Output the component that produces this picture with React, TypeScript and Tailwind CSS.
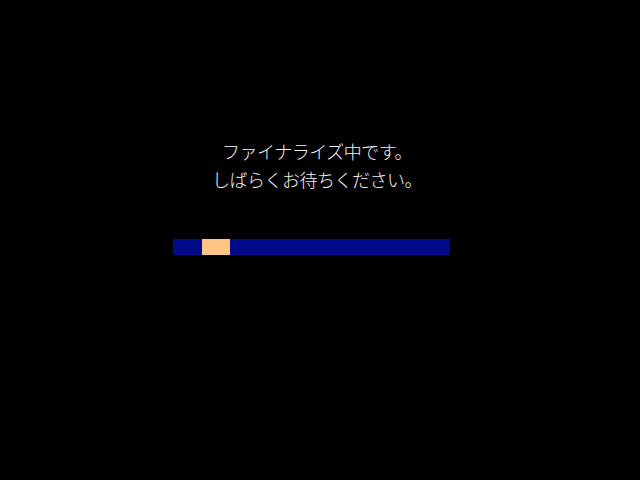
import React from 'react';

export default function App() {
  return (
    <div className="w-[640px] h-[480px] bg-black flex flex-col items-center pt-[137px] pr-[18px]">
      <div
        className="pl-[12px] text-[18px] leading-[28px] text-[#f2f2f2] text-center tracking-[-0.5px] font-light"
        style={{ fontFamily: '"Noto Sans CJK JP", "Noto Sans", sans-serif' }}
      >
        <p>ファイナライズ中です。</p>
        <p>しばらくお待ちください。</p>
      </div>
      <div className="mt-[46px] w-[277px] h-[16px] bg-[#000a8a] flex pl-[29px]">
        <div className="w-[28px] h-full bg-[#ffc585]" />
      </div>
    </div>
  );
}
